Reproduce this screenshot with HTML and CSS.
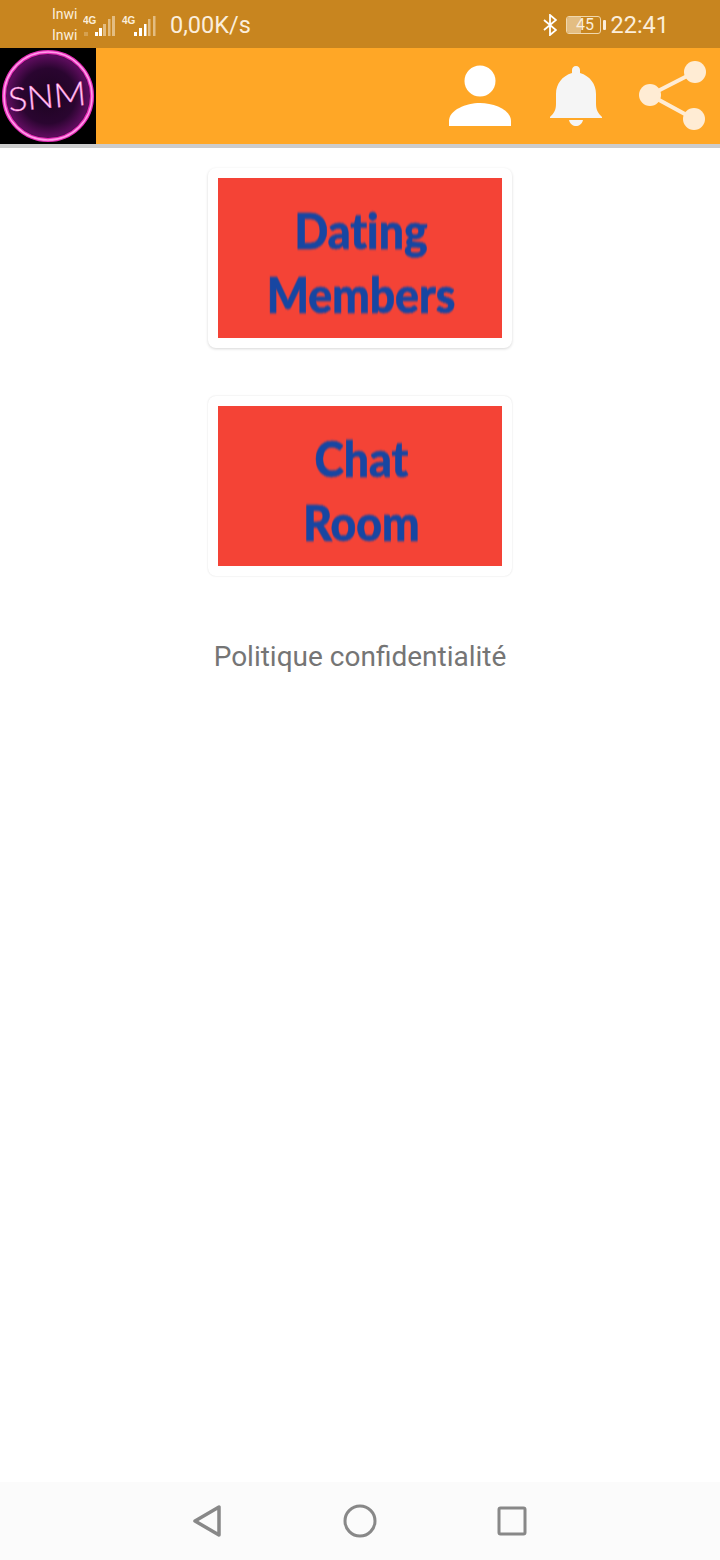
FILE: index.html
```html
<!DOCTYPE html>
<html lang="fr">
<head>
    <meta charset="utf-8">
    <title>SNM</title>
    <link rel="stylesheet" href="styles.css">
</head>
<body>
    <div class="page">
        <div class="status">
            <div class="carriers">
                <span>Inwi</span>
                <span>Inwi</span>
            </div>
            <svg class="signal" width="74" height="30" viewBox="0 0 74 30">
                <text x="0" y="13" class="net">4G</text>
                <path class="dim" d="M1 22h4M1 24h4" stroke-width="1"/>
                <rect class="bar" x="12" y="21" width="3" height="4"/>
                <rect class="bar" x="16" y="17" width="3" height="8"/>
                <rect class="bar off" x="20" y="13" width="3" height="12"/>
                <rect class="bar off" x="25" y="8" width="2.5" height="17"/>
                <rect class="bar off" x="29" y="5" width="3" height="20"/>
                <text x="39" y="13" class="net">4G</text>
                <rect class="bar" x="51" y="21" width="3" height="4"/>
                <rect class="bar" x="56" y="17" width="3" height="8"/>
                <rect class="bar" x="61" y="13" width="2.500" height="12"/>
                <rect class="bar off" x="65" y="8" width="2.500" height="17"/>
                <rect class="bar off" x="70" y="5" width="2.500" height="20"/>
            </svg>
            <span class="speed">0,00K/s</span>
            <div class="status-right">
                <svg class="bt" width="14" height="22" viewBox="0 0 14 22">
                    <path d="M1 6l12 10-6 5V1l6 5L1 16" fill="none" stroke="#fff" stroke-width="1.800"/>
                </svg>
                <div class="battery">
                    <div class="level"></div>
                    <span>45</span>
                </div>
                <div class="battery-tip"></div>
                <span class="clock">22:41</span>
            </div>
        </div>

        <div class="toolbar">
            <svg class="logo" width="96" height="96" viewBox="0 0 96 96">
                <defs>
                    <radialGradient id="glow">
                        <stop offset="0" stop-color="#1c0420"/>
                        <stop offset="0.6" stop-color="#2a0530"/>
                        <stop offset="0.88" stop-color="#5c0c5c"/>
                        <stop offset="1" stop-color="#30062e"/>
                    </radialGradient>
                </defs>
                <rect width="96" height="96" fill="#000"/>
                <circle cx="48" cy="48" r="46" fill="url(#glow)"/>
                <circle cx="48" cy="48" r="44" fill="none" stroke="#e62cb8" stroke-width="4"/>
                <circle cx="48" cy="48" r="44" fill="none" stroke="#ff9ce8" stroke-width="1.500"/>
                <text x="47" y="60" text-anchor="middle" class="logo-text" textLength="78" lengthAdjust="spacingAndGlyphs" transform="rotate(-5 48 48)">SNM</text>
            </svg>
            <div class="actions">
                <svg class="action" viewBox="0 0 96 96">
                    <circle cx="48" cy="33" r="15.500" fill="#fff"/>
                    <path d="M17 78v-5c0-11 17-18 31-18s31 7 31 18v5z" fill="#fff"/>
                </svg>
                <svg class="action" viewBox="0 0 96 96">
                    <path d="M48 18c-2.500 0-4 1.800-4 4v3c-10 3-16 11-16 21v10c0 6-2 9-6 13v1h52v-1c-4-4-6-7-6-13V46c0-10-6-18-16-21v-3c0-2.200-1.500-4-4-4z" fill="#f5f5f5"/>
                    <path d="M41 72h14c-1 4-4 6-7 6s-6-2-7-6z" fill="#f5f5f5"/>
                </svg>
                <svg class="action" viewBox="0 0 96 96">
                    <path d="M71 24L26 47l44 24" fill="none" stroke="#ffecd4" stroke-width="4"/>
                    <circle cx="71" cy="24" r="11" fill="#ffecd4"/>
                    <circle cx="26" cy="47" r="11" fill="#ffecd4"/>
                    <circle cx="70" cy="71" r="11" fill="#ffecd4"/>
                </svg>
            </div>
        </div>

        <div class="content">
            <div class="card">
                <div class="banner"><span>Dating<br>Members</span></div>
            </div>
            <div class="card flat">
                <div class="banner"><span>Chat<br>Room</span></div>
            </div>
            <p class="policy">Politique confidentialité</p>
        </div>

        <div class="navbar">
            <svg width="28" height="34" viewBox="0 0 28 34">
                <path d="M26 3v28L2 17z" fill="none" stroke="#888" stroke-width="3.500" stroke-linejoin="round"/>
            </svg>
            <svg class="nav-home" width="34" height="34" viewBox="0 0 34 34">
                <circle cx="17" cy="17" r="15" fill="none" stroke="#888" stroke-width="3"/>
            </svg>
            <svg width="32" height="32" viewBox="0 0 32 32">
                <rect x="3" y="3" width="26" height="26" rx="1.500" fill="none" stroke="#888" stroke-width="3"/>
            </svg>
        </div>
    </div>
</body>
</html>
```

FILE: styles.css
```css
*{
	margin: 0;
	padding: 0;
	box-sizing: border-box;
}
body{
	background: #fff;
	font-family: Roboto, "Liberation Sans", sans-serif;
}
.page{
	width: 720px;
	height: 1560px;
	display: flex;
	flex-direction: column;
}
.status{
	height: 48px;
	background: #c8851f;
	display: flex;
	align-items: center;
	padding: 1px 0 0 52px;
	color: #fff;
}
.carriers{
	display: flex;
	flex-direction: column;
	width: 31px;
	font-size: 14px;
	line-height: 21px;
	color: #fbeedb;
}
.signal{
	margin-top: 2px;
	flex: none;
}
.net{
	font-family: "Liberation Sans", sans-serif;
	font-size: 10px;
	font-weight: bold;
	fill: #fbeedb;
}
.dim{
	stroke: #e3bd82;
}
.bar{
	fill: #fff;
}
.bar.off{
	fill: #e3bd82;
}
.speed{
	margin-left: 13px;
	font-size: 23.500px;
	color: #fbeedb;
}
.status-right{
	margin-left: auto;
	padding-right: 51px;
	display: flex;
	align-items: center;
}
.bt{
	margin-right: 9px;
}
.battery{
	position: relative;
	width: 35px;
	height: 18px;
	border: 1px solid #f0d8ae;
	border-radius: 3px;
	overflow: hidden;
}
.level{
	width: 14px;
	height: 100%;
	background: #e3bd82;
}
.battery span{
	position: absolute;
	top: 0;
	left: 1px;
	width: 100%;
	text-align: center;
	font-size: 16px;
	line-height: 16px;
	color: #fbeedb;
}
.battery-tip{
	width: 3px;
	height: 10px;
	margin-left: 2px;
	background: #fbeedb;
	border-radius: 1px;
}
.clock{
	margin-left: 4px;
	font-size: 23.500px;
	color: #fbeedb;
}
.toolbar{
	height: 100px;
	background: #ffa726;
	border-bottom: 4px solid #cccccc;
	display: flex;
	justify-content: space-between;
}
.logo{
	display: block;
}
.logo-text{
	font-family: Lato, "Liberation Sans", sans-serif;
	font-weight: 300;
	font-size: 33px;
	fill: #ffe6f8;
	stroke: #ff66d8;
	stroke-width: 0.500;
}
.actions{
	display: flex;
}
.action{
	display: block;
	width: 96px;
	height: 96px;
}
.content{
	flex: 1;
	display: flex;
	flex-direction: column;
	align-items: center;
	padding-top: 20px;
}
.card{
	width: 304px;
	height: 180px;
	padding: 10px;
	margin-bottom: 48px;
	background: #fff;
	border-radius: 8px;
	box-shadow: 0 1px 3px rgba(0,0,0,0.16);
}
.card.flat{
	box-shadow: 0 0 2px rgba(0,0,0,0.14);
}
.banner{
	height: 160px;
	background: #f44336;
	display: flex;
	align-items: center;
	justify-content: center;
	text-align: center;
	padding: 8px 0 0 2px;
}
.banner span{
	font-family: Lato, "Open Sans", sans-serif;
	font-weight: 900;
	font-size: 50px;
	line-height: 64px;
	color: #1746a2;
	font-variant-ligatures: none;
	-webkit-text-stroke: 0.6px #1746a2;
	transform: scaleX(0.89);
	filter: blur(0.8px);
}
.policy{
	margin-top: 13px;
	font-size: 28px;
	line-height: 40px;
	color: #757575;
}
.navbar{
	height: 78px;
	background: #fbfbfb;
	display: flex;
	align-items: center;
	justify-content: center;
}
.nav-home{
	margin: 0 119px 0 122px;
}
```
